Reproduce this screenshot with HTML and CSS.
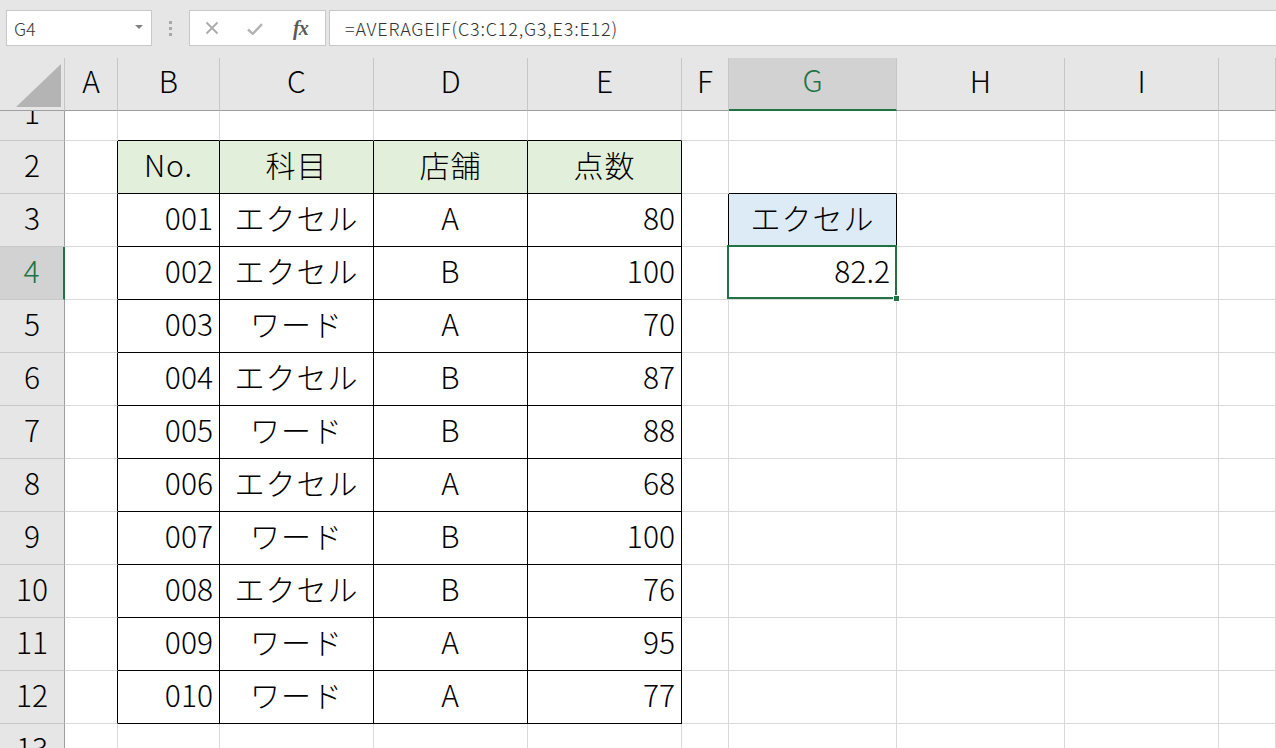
FILE: index.html
```html
<!DOCTYPE html>
<html lang="ja">
<head>
<meta charset="utf-8">
<title>AVERAGEIF</title>
<link rel="stylesheet" href="styles.css">
</head>
<body>
<div class="topbar">
  <div class="namebox"><span>G4</span><span class="arrow"></span></div>
  <div class="grip"><i></i><i></i><i></i></div>
  <div class="fxbtns">
    <svg class="ic-x" width="14" height="14" viewBox="0 0 14 14"><path d="M1.5 1.5L12.5 12.5M12.5 1.5L1.5 12.5" stroke="#ababab" stroke-width="1.8" fill="none"/></svg>
    <svg class="ic-ok" width="16" height="12" viewBox="0 0 16 12"><path d="M1 6.5L5.8 10.8L15 1.2" stroke="#b3b3b3" stroke-width="2.4" fill="none"/></svg>
    <span class="fx">fx</span>
  </div>
  <div class="formula">=AVERAGEIF(C3:C12,G3,E3:E12)</div>
</div>
<div class="sheet">
  <div class="row hrow">
    <div class="corner"><span class="tri"></span></div>
    <div>A</div><div>B</div><div>C</div><div>D</div><div>E</div><div>F</div><div class="sel">G</div><div>H</div><div>I</div><div></div>
  </div>
  <div class="row r1">
    <div class="rh">1</div><div></div><div class="kb"></div><div class="kb"></div><div class="kb"></div><div class="kb"></div><div></div><div></div><div></div><div></div><div></div>
  </div>
  <div class="row">
    <div class="rh">2</div><div class="kr"></div>
    <div class="t hd m">No.</div><div class="t hd m">科目</div><div class="t hd m">店舗</div><div class="t hd m">点数</div>
    <div></div><div class="kb"></div><div></div><div></div><div></div>
  </div>
  <div class="row">
    <div class="rh">3</div><div class="kr"></div>
    <div class="t r">001</div><div class="t m">エクセル</div><div class="t m">A</div><div class="t r">80</div>
    <div class="kr"></div><div class="t blue m">エクセル</div><div></div><div></div><div></div>
  </div>
  <div class="row">
    <div class="rh act">4</div><div class="kr"></div>
    <div class="t r">002</div><div class="t m">エクセル</div><div class="t m">B</div><div class="t r">100</div>
    <div></div><div class="r cur">82.2<span class="selbox"></span><span class="handle"></span></div><div></div><div></div><div></div>
  </div>
  <div class="row">
    <div class="rh">5</div><div class="kr"></div>
    <div class="t r">003</div><div class="t m">ワード</div><div class="t m">A</div><div class="t r">70</div>
    <div></div><div></div><div></div><div></div><div></div>
  </div>
  <div class="row">
    <div class="rh">6</div><div class="kr"></div>
    <div class="t r">004</div><div class="t m">エクセル</div><div class="t m">B</div><div class="t r">87</div>
    <div></div><div></div><div></div><div></div><div></div>
  </div>
  <div class="row">
    <div class="rh">7</div><div class="kr"></div>
    <div class="t r">005</div><div class="t m">ワード</div><div class="t m">B</div><div class="t r">88</div>
    <div></div><div></div><div></div><div></div><div></div>
  </div>
  <div class="row">
    <div class="rh">8</div><div class="kr"></div>
    <div class="t r">006</div><div class="t m">エクセル</div><div class="t m">A</div><div class="t r">68</div>
    <div></div><div></div><div></div><div></div><div></div>
  </div>
  <div class="row">
    <div class="rh">9</div><div class="kr"></div>
    <div class="t r">007</div><div class="t m">ワード</div><div class="t m">B</div><div class="t r">100</div>
    <div></div><div></div><div></div><div></div><div></div>
  </div>
  <div class="row">
    <div class="rh">10</div><div class="kr"></div>
    <div class="t r">008</div><div class="t m">エクセル</div><div class="t m">B</div><div class="t r">76</div>
    <div></div><div></div><div></div><div></div><div></div>
  </div>
  <div class="row">
    <div class="rh">11</div><div class="kr"></div>
    <div class="t r">009</div><div class="t m">ワード</div><div class="t m">A</div><div class="t r">95</div>
    <div></div><div></div><div></div><div></div><div></div>
  </div>
  <div class="row">
    <div class="rh">12</div><div class="kr"></div>
    <div class="t r">010</div><div class="t m">ワード</div><div class="t m">A</div><div class="t r">77</div>
    <div></div><div></div><div></div><div></div><div></div>
  </div>
  <div class="row">
    <div class="rh">13</div><div></div><div></div><div></div><div></div><div></div><div></div><div></div><div></div><div></div><div></div>
  </div>
</div>
</body>
</html>
```

FILE: styles.css
```css
* { box-sizing: border-box; margin: 0; padding: 0; }
html, body { width: 1276px; height: 748px; overflow: hidden; background: #fff; }
body { font-family: "Noto Sans CJK JP", "Noto Sans", sans-serif; font-weight: 300; color: #000; }

.topbar { height: 58px; background: #e6e6e6; display: flex; align-items: flex-start; padding: 10px 0 0 6px; }
.namebox { width: 146px; height: 36px; background: #fff; border: 1px solid #c8c8c8; display: flex; align-items: center; justify-content: space-between; padding: 0 8px 0 7px; font-size: 18px; line-height: 18px; color: #3a3a3a; }
.arrow { width: 0; height: 0; border-left: 4px solid transparent; border-right: 4px solid transparent; border-top: 4px solid #808080; margin-top: -2px; }
.grip { width: 37px; height: 36px; display: flex; flex-direction: column; align-items: center; justify-content: center; gap: 3px; padding-right: 1px; }
.grip i { display: block; width: 3px; height: 3px; background: #a8a8a8; }
.fxbtns { width: 137px; height: 36px; background: #fff; border: 1px solid #c8c8c8; display: flex; align-items: center; padding-left: 15px; }
.ic-x { margin-right: 28px; }
.ic-ok { margin-right: 30px; margin-top: 1px; }
.fx { font-family: "Liberation Serif", serif; font-style: italic; font-weight: bold; font-size: 20px; line-height: 20px; color: #5a5a5a; letter-spacing: -1px; }
.formula { flex: 1; height: 36px; margin-left: 3px; background: #fff; border: 1px solid #c8c8c8; border-right: none; display: flex; align-items: center; padding-left: 15px; font-size: 18px; line-height: 18px; letter-spacing: 0.8px; color: #333; }

.row { display: grid; grid-template-columns: 65px 53px 102px 154px 154px 154px 47px 168px 168px 154px 1fr; height: 53px; }
.row.r1 { height: 30px; }
.row.r1 > div { overflow: hidden; }
.row > div { border-right: 1px solid #d9d9d9; border-bottom: 1px solid #d9d9d9; display: flex; align-items: flex-end; font-size: 30px; line-height: 30px; padding: 0 6px 14px; white-space: nowrap; }

.hrow > div { background: #e6e6e6; border-right-color: #c6c6c6; border-bottom-color: #9e9e9e; justify-content: center; padding: 0 0 15px; }
.hrow > .sel { background: #d2d2d2; color: #217346; border-bottom: 2px solid #217346; }
.hrow > .corner { align-items: flex-end; justify-content: flex-end; padding: 0 3px 3px 0; }
.tri { display: block; width: 45px; height: 43px; background: #b4b4b4; clip-path: polygon(100% 0, 100% 100%, 0 100%); }

.row > .rh { background: #e6e6e6; border-right-color: #9e9e9e; border-bottom-color: #c8c8c8; justify-content: center; padding: 0 0 14px; }
.row > .rh.act { background: #d2d2d2; color: #217346; border-right: 2px solid #217346; }

.row > .t { border-right-color: #000; border-bottom-color: #000; }
.row > .kr { border-right-color: #000; }
.row > .kb { border-bottom-color: #000; }
.row > .hd { background: #e2efda; }
.row > .blue { background: #ddebf7; }
.row > .r { justify-content: flex-end; }
.row > .m { justify-content: center; }
.row > .m.t { letter-spacing: 1px; }

.row > .cur { position: relative; }
.selbox { position: absolute; left: -2px; top: -2px; right: -1px; bottom: 0; border: 2px solid #217346; z-index: 2; }
.handle { position: absolute; left: 164px; top: 48px; width: 7px; height: 7px; background: #217346; border: 1px solid #fff; z-index: 3; }
```
